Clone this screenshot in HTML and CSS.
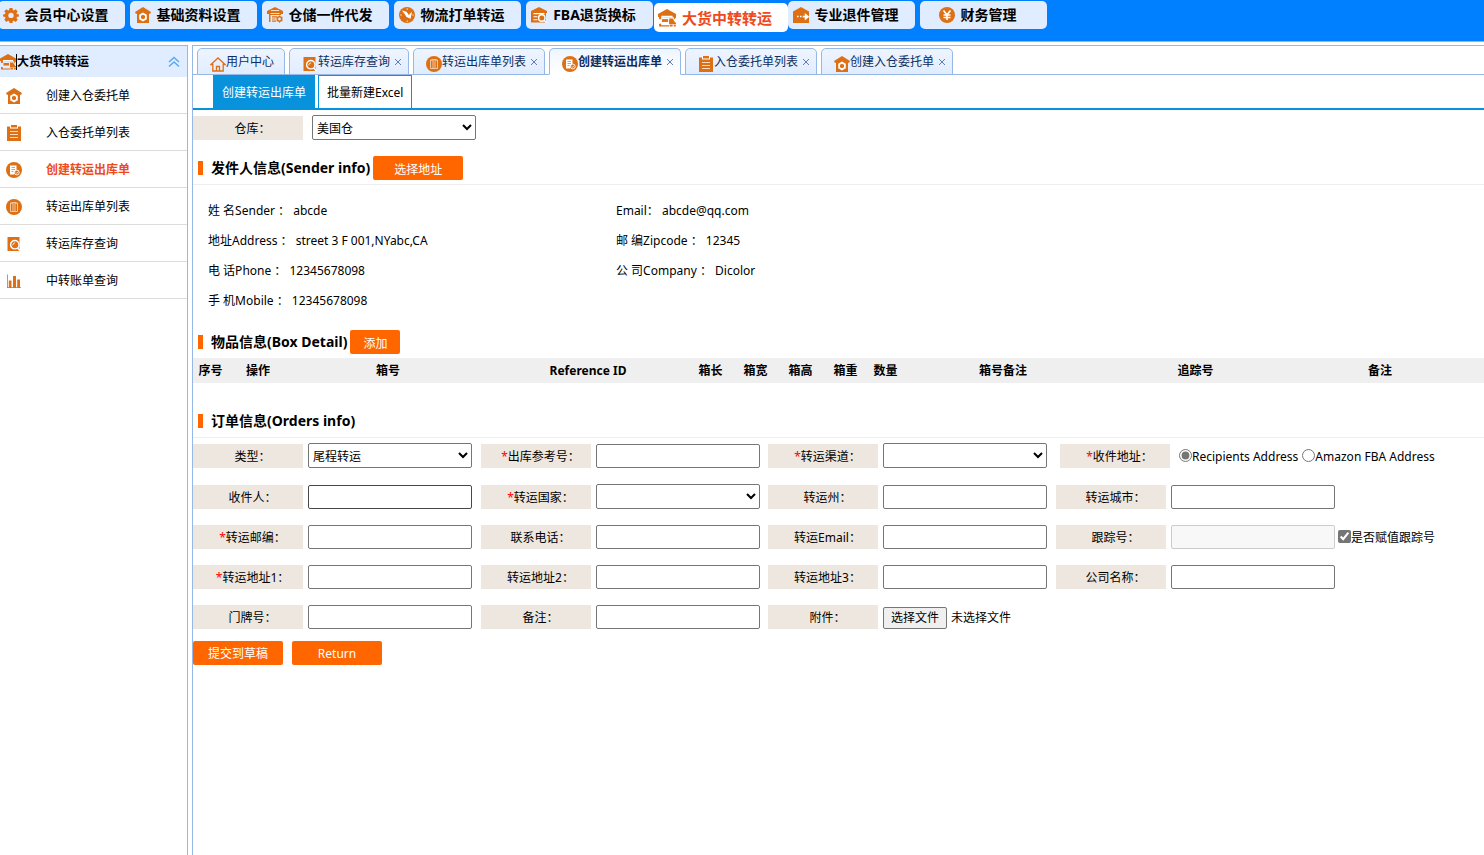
FILE: index.html
```html
<!DOCTYPE html>
<html lang="zh-CN">
<head>
<meta charset="utf-8">
<title>创建转运出库单</title>
<link rel="stylesheet" href="styles.css">
</head>
<body>
<svg class="sprite" aria-hidden="true">
  <symbol id="i-gear" viewBox="0 0 16 16"><path fill-rule="evenodd" d="M6.500 1h3l.4 2 1 .4 1.700-1.200 2.100 2.100-1.200 1.700.4 1 2 .4v2.200l-2 .5-.4 1 1.200 1.700-2.100 2.100-1.700-1.200-1 .4-.4 1.900h-3l-.4-1.900-1-.4-1.700 1.200-2.100-2.100 1.200-1.700-.4-1-2-.5V7.400l2-.4.4-1-1.200-1.700 2.100-2.100 1.700 1.200 1-.4zM8 5.700a2.700 2.700 0 1 0 0 5.400 2.700 2.700 0 0 0 0-5.400z"/></symbol>
  <symbol id="i-house" viewBox="0 0 16 16"><path d="M8 0l8 5-.8 1.800H14V16H2V6.800H.8L0 5z"/><path fill="none" stroke="#fff" stroke-width="1.800" d="M8 6.600l2.900 1.700v3.400L8 13.400l-2.900-1.700V8.300z"/></symbol>
  <symbol id="i-depot" viewBox="0 0 16 16"><path d="M8 0l8 4v3h-2V6H2v1H0V4z"/><path d="M2 6h12v2H2zM2 8h1.500v7H2zM5 9.200h5v1.200H5zM5 11.400h3.500v1.200H5zM5 13.600h4v1.200H5z"/><path class="hole" d="M4 3.300h8v.8H4zM3.500 6.300h9V7h-9z"/><circle cx="12.500" cy="12" r="2.200" fill="none" stroke="currentColor" stroke-width="1.600"/><path stroke="currentColor" d="M12.500 8.500v1.500M12.500 14v1.700M9.500 10.300l1.300.7M14.200 13l1.300.8M15.500 10.300l-1.300.7M10.800 13l-1.300.8"/></symbol>
  <symbol id="i-compass" viewBox="0 0 16 16"><circle cx="8" cy="8" r="8"/><path class="hole" d="M3 3.500l4.500 1.300 2.300 3.200L12.500 5l.3 1-1.300 5.800L7.500 10 6 7.500z"/><path class="hole" opacity=".8" d="M7.700 1.200h1v1.500h-1zM1.200 7.500h1.500v1H1.200zM13.300 7.500h1.500v1h-1.500zM7.700 13.500h1V15h-1z"/></symbol>
  <symbol id="i-find" viewBox="0 0 16 16"><path d="M8 0l8 4v2H0V4z"/><path d="M0 5h15v10.500H0z"/><path class="hole" d="M2.500 6h11v1.200h-11zM2.500 9.200h4v1h-4zM2.500 12.300h4v1h-4z"/><circle cx="10.800" cy="11" r="3.200" stroke="#fff" stroke-width="1.400"/><path stroke="#fff" stroke-width="1.500" d="M13 13.200l2.600 2.500"/></symbol>
  <symbol id="i-transit" viewBox="0 0 16 16"><path d="M8 0l8 4.500v3L14 9.500V7.300H2.800V9H1V15.500H10V14.500H2.800V13H10V9.500h2.600L14.500 12H16v1.500h-6V13H1V7H0V4.500z"/><path d="M3.500 9H9v2.500H3.500z"/><path class="hole" d="M3 6h10v1.300H3z"/><path d="M10 8.500h3l2 3V13h-5zM10.500 14h2.500v1.500h-2.500zM14 14h1.800v1.500H14z"/></symbol>
  <symbol id="i-return" viewBox="0 0 16 16"><path d="M8 0l8 4.500V16H0V4.500z"/><path class="hole" d="M4 8.700h1.500v1.600H4zM7 8.700h1.500v1.600H7zM9.800 8.700h2V6l4.200 3.500v.5l-4.200 3.500v-3h-2z"/></symbol>
  <symbol id="i-yen" viewBox="0 0 16 16"><circle cx="8" cy="8" r="8"/><path fill="none" stroke="#fff" stroke-width="1.600" d="M4.500 3.500L8 7.700l3.500-4.200M8 7.500V13M4.500 8h7M4.500 10.500h7"/></symbol>
  <symbol id="i-home" viewBox="0 0 16 16"><path fill="none" stroke="currentColor" stroke-width="1.300" d="M1 8.500L8 2l7 6.500h-1.800V15H2.800V8.500zM6.500 15v-4.500h3V15"/></symbol>
  <symbol id="i-query" viewBox="0 0 16 16"><path d="M1.500 1h12v14h-12z"/><circle cx="8.800" cy="8.700" r="4.200" stroke="#fff" stroke-width="1.400"/><path stroke="#fff" stroke-width="1.500" d="M11.500 12l3 3"/><path stroke="#fff" fill="none" d="M6.800 9.300c0-1.500 1-2.400 2.300-2.400"/></symbol>
  <symbol id="i-round-list" viewBox="0 0 16 16"><circle cx="8" cy="8" r="8"/><path fill="none" stroke="#f4d2b2" stroke-width=".9" d="M6 4H4.500v8.500h7V4H10M6 3.500h4V5H6zM6 7h4M6 9h4M6 11h4"/></symbol>
  <symbol id="i-round-doc" viewBox="0 0 16 16"><circle cx="8" cy="8" r="8"/><path class="hole" d="M4 3.500h6.500V8L8 12.500H4z"/><path fill="none" stroke="currentColor" stroke-width=".7" d="M5.500 5.500H9M5.500 7.500H9M5.500 9.500h2"/><circle cx="10.800" cy="10.500" r="2.400" stroke="#fff" stroke-width=".9"/><path fill="none" stroke="#fff" stroke-width=".8" d="M9.800 10.500l.8.800 1.300-1.500"/></symbol>
  <symbol id="i-list" viewBox="0 0 16 16"><path d="M1 1.500h14V16H1z"/><path class="hole" d="M4 0h1v2.500h6V0h1v3.500H4z"/><path d="M5 0h6v2H5z"/><path class="hole" opacity=".75" d="M4 6h8v1H4zM4 9h8v1H4zM4 12h8v1H4z"/></symbol>
  <symbol id="i-chart" viewBox="0 0 16 16"><path d="M1 1.500h.8v12.700H15v.8H1zM2.800 7.500h2.700v6.700H2.800zM7 3h3v11.200H7zM11.200 6.500H14v7.700h-2.800z"/></symbol>
</svg>

<header class="topbar">
  <nav class="topnav">
    <a class="topnav-item" href="#"><svg class="icon"><use href="#i-gear"/></svg>会员中心设置</a>
    <a class="topnav-item" href="#"><svg class="icon"><use href="#i-house"/></svg>基础资料设置</a>
    <a class="topnav-item" href="#"><svg class="icon"><use href="#i-depot"/></svg>仓储一件代发</a>
    <a class="topnav-item" href="#"><svg class="icon"><use href="#i-compass"/></svg>物流打单转运</a>
    <a class="topnav-item" href="#"><svg class="icon"><use href="#i-find"/></svg>FBA退货换标</a>
    <a class="topnav-item active" href="#"><svg class="icon"><use href="#i-transit"/></svg>大货中转转运</a>
    <a class="topnav-item" href="#"><svg class="icon"><use href="#i-return"/></svg>专业退件管理</a>
    <a class="topnav-item" href="#"><svg class="icon"><use href="#i-yen"/></svg>财务管理</a>
  </nav>
</header>

<div class="layout">
  <aside class="sidebar">
    <div class="sidebar-head">
      <svg class="icon"><use href="#i-transit"/></svg>
      <span class="sidebar-title">大货中转转运</span>
      <svg class="collapse" viewBox="0 0 12 12"><path d="M1 6l5-4.500L11 6M1 10.500L6 6l5 4.500"/></svg>
    </div>
    <nav class="menu">
      <a class="menu-item" href="#"><svg class="icon"><use href="#i-house"/></svg>创建入仓委托单</a>
      <a class="menu-item" href="#"><svg class="icon"><use href="#i-list"/></svg>入仓委托单列表</a>
      <a class="menu-item active" href="#"><svg class="icon"><use href="#i-round-doc"/></svg>创建转运出库单</a>
      <a class="menu-item" href="#"><svg class="icon"><use href="#i-round-list"/></svg>转运出库单列表</a>
      <a class="menu-item" href="#"><svg class="icon"><use href="#i-query"/></svg>转运库存查询</a>
      <a class="menu-item" href="#"><svg class="icon"><use href="#i-chart"/></svg>中转账单查询</a>
    </nav>
  </aside>

  <main class="main">
    <div class="tabs">
      <a class="tab" href="#"><svg class="icon"><use href="#i-home"/></svg>用户中心</a>
      <a class="tab" href="#"><svg class="icon"><use href="#i-query"/></svg>转运库存查询<svg class="close" viewBox="0 0 8 8"><path d="M1 1l6 6M7 1L1 7"/></svg></a>
      <a class="tab" href="#"><svg class="icon"><use href="#i-round-list"/></svg>转运出库单列表<svg class="close" viewBox="0 0 8 8"><path d="M1 1l6 6M7 1L1 7"/></svg></a>
      <a class="tab active" href="#"><svg class="icon"><use href="#i-round-doc"/></svg>创建转运出库单<svg class="close" viewBox="0 0 8 8"><path d="M1 1l6 6M7 1L1 7"/></svg></a>
      <a class="tab" href="#"><svg class="icon"><use href="#i-list"/></svg>入仓委托单列表<svg class="close" viewBox="0 0 8 8"><path d="M1 1l6 6M7 1L1 7"/></svg></a>
      <a class="tab" href="#"><svg class="icon"><use href="#i-house"/></svg>创建入仓委托单<svg class="close" viewBox="0 0 8 8"><path d="M1 1l6 6M7 1L1 7"/></svg></a>
    </div>

    <div class="subtabs">
      <a class="subtab active" href="#">创建转运出库单</a>
      <a class="subtab" href="#">批量新建Excel</a>
    </div>

    <div class="depot-row">
      <label class="label" for="depot">仓库：</label>
      <select class="control" id="depot"><option>美国仓</option></select>
    </div>

    <section>
      <h2 class="heading ruled"><span>发件人信息(Sender info)</span><button class="btn" type="button">选择地址</button></h2>
      <div class="sender">
        <div>姓 名Sender ： abcde</div><div>Email： abcde@qq.com</div>
        <div>地址Address ： street 3 F 001,NYabc,CA</div><div>邮 编Zipcode ： 12345</div>
        <div>电 话Phone ： 12345678098</div><div>公 司Company ： Dicolor</div>
        <div>手 机Mobile ： 12345678098</div>
      </div>
    </section>

    <section class="boxes">
      <h2 class="heading"><span>物品信息(Box Detail)</span><button class="btn small" type="button">添加</button></h2>
      <table class="box-table">
        <colgroup><col class="w35"><col class="w60"><col class="w200"><col class="w200"><col class="w45"><col class="w45"><col class="w45"><col class="w45"><col class="w35"><col class="w200"><col class="w185"><col></colgroup>
        <thead><tr><th>序号</th><th>操作</th><th>箱号</th><th>Reference ID</th><th>箱长</th><th>箱宽</th><th>箱高</th><th>箱重</th><th>数量</th><th>箱号备注</th><th>追踪号</th><th class="last">备注</th></tr></thead>
      </table>
    </section>

    <section>
      <h2 class="heading ruled"><span>订单信息(Orders info)</span></h2>
      <form class="order">
        <div class="fields">
          <div class="field"><label class="label" for="type">类型：</label><select class="control" id="type"><option>尾程转运</option></select></div>
          <div class="field"><label class="label" for="ref"><i>*</i>出库参考号：</label><input class="control" id="ref" type="text"></div>
          <div class="field"><label class="label" for="channel"><i>*</i>转运渠道：</label><select class="control" id="channel"><option></option></select></div>
          <div class="field choice"><span class="label"><i>*</i>收件地址：</span>
            <div class="radios">
              <label class="tick"><input type="radio" name="addr" checked>Recipients Address</label>
              <label class="tick"><input type="radio" name="addr">Amazon FBA Address</label>
            </div>
          </div>

          <div class="field"><label class="label" for="person">收件人：</label><input class="control current" id="person" type="text"></div>
          <div class="field"><label class="label" for="country"><i>*</i>转运国家：</label><select class="control" id="country"><option></option></select></div>
          <div class="field"><label class="label" for="state">转运州：</label><input class="control" id="state" type="text"></div>
          <div class="field"><label class="label" for="city">转运城市：</label><input class="control" id="city" type="text"></div>

          <div class="field"><label class="label" for="zip"><i>*</i>转运邮编：</label><input class="control" id="zip" type="text"></div>
          <div class="field"><label class="label" for="phone">联系电话：</label><input class="control" id="phone" type="text"></div>
          <div class="field"><label class="label" for="email">转运Email：</label><input class="control" id="email" type="text"></div>
          <div class="field"><label class="label" for="track">跟踪号：</label><input class="control" id="track" type="text" disabled><label class="tick after"><input type="checkbox" checked>是否赋值跟踪号</label></div>

          <div class="field"><label class="label" for="a1"><i>*</i>转运地址1：</label><input class="control" id="a1" type="text"></div>
          <div class="field"><label class="label" for="a2">转运地址2：</label><input class="control" id="a2" type="text"></div>
          <div class="field"><label class="label" for="a3">转运地址3：</label><input class="control" id="a3" type="text"></div>
          <div class="field"><label class="label" for="company">公司名称：</label><input class="control" id="company" type="text"></div>

          <div class="field"><label class="label" for="door">门牌号：</label><input class="control" id="door" type="text"></div>
          <div class="field"><label class="label" for="note">备注：</label><input class="control" id="note" type="text"></div>
          <div class="field"><label class="label" for="file">附件：</label><input id="file" type="file" hidden><div class="file"><button class="file-btn" type="button">选择文件</button><span>未选择文件</span></div></div>
        </div>
        <div class="actions">
          <button class="btn" type="button">提交到草稿</button>
          <button class="btn" type="button">Return</button>
        </div>
      </form>
    </section>
  </main>
</div>
</body>
</html>
```
FILE: styles.css
```css
* { box-sizing: border-box; }

body {
  margin: 0;
  min-height: 100vh;
  display: flex;
  flex-direction: column;
  overflow-x: hidden;
  background: #fff;
  color: #000;
  font: 12px/18px "Noto Sans", "Noto Sans CJK SC", sans-serif;
}

a { color: inherit; text-decoration: none; }
button, input, select { font: inherit; color: inherit; }

.sprite { display: none; }
.hole { fill: #fff; }
.icon {
  flex: none;
  width: 16px;
  height: 16px;
  fill: currentColor;
  color: #dd7014;
}

/* top navigation */
.topbar {
  height: 42px;
  background: #007fff;
  border-bottom: 1px solid #95b8e7;
}
.topnav {
  display: flex;
  gap: 5px;
  padding-top: 1px;
  margin-left: -2px;
}
.topnav-item {
  flex: none;
  display: flex;
  align-items: center;
  justify-content: center;
  gap: 6px;
  width: 127px;
  height: 28px;
  padding-right: 12px;
  border-radius: 5px;
  background: #e0ecff;
  font-size: 14px;
  font-weight: bold;
  white-space: nowrap;
}
.topnav-item.active {
  width: 134px;
  height: 29px;
  margin: 2px -5px 0 -4px;
  background: #fff;
  color: #ef4a1c;
  font-size: 15px;
}
.topnav-item.active .icon { width: 18px; height: 18px; }

/* page frame */
.layout {
  flex: 1;
  display: flex;
  gap: 4px;
  padding-top: 3px;
}
.sidebar {
  flex: none;
  width: 188px;
  border: solid #95b8e7;
  border-width: 1px 1px 0 0;
}
.main {
  flex: 1;
  min-width: 0;
  border: solid #95b8e7;
  border-width: 1px 0 0 1px;
}

/* sidebar */
.sidebar-head {
  display: flex;
  align-items: center;
  height: 31px;
  padding: 1px 7px 0 0;
  background: #e0ecff;
  font-weight: bold;
}
.sidebar-title {
  flex: 1;
  line-height: 16px;
  border-left: 1px solid #000;
}
.collapse {
  width: 12px;
  height: 12px;
  fill: none;
  stroke: #5aa9f0;
  stroke-width: 1.5;
}
.menu-item {
  display: flex;
  align-items: center;
  gap: 24px;
  height: 37px;
  padding: 2px 0 0 6px;
  border-bottom: 1px solid #ddd;
}
.menu-item.active { color: #ef4a1c; font-weight: bold; }

/* document tabs */
.tabs {
  display: flex;
  gap: 4px;
  height: 29px;
  padding: 2px 0 0 4px;
  border-bottom: 1px solid #95b8e7;
}
.tab {
  display: flex;
  align-items: center;
  height: 27px;
  padding: 0 10px 0 12px;
  border: 1px solid #95b8e7;
  border-radius: 5px 5px 0 0;
  background: linear-gradient(#eff5ff, #e0ecff);
  color: #0e2d5f;
  white-space: nowrap;
}
.tab .icon { margin-top: 4px; }
.tab.active {
  background: linear-gradient(#eff5ff, #fff);
  border-bottom-color: #fff;
  font-weight: bold;
}
.close {
  width: 8px;
  height: 8px;
  margin: 0 -4px 0 4px;
  fill: none;
  stroke: #5c7fb5;
}

.subtabs {
  display: flex;
  gap: 3px;
  height: 35px;
  padding-left: 20px;
  border-bottom: 2px solid #0892dc;
}
.subtab {
  display: flex;
  align-items: center;
  padding: 2px 8px 0;
  border: solid #0892dc;
  border-width: 1px 1px 0;
}
.subtab.active { background: #0892dc; color: #fff; }

/* shared controls */
.label {
  flex: none;
  width: 110px;
  height: 24px;
  padding-left: 9px;
  background: #eee7df;
  line-height: 26px;
  text-align: center;
}
.label i { color: #f00; font-style: normal; }
.control {
  flex: none;
  width: 164px;
  height: 24px;
  padding: 0 4px;
  border: 1px solid #767676;
  border-radius: 2px;
  background: #fff;
}
select.control { height: 25px; padding: 2px 0 0; }
.control.current { border-color: #484848; }
.control:disabled { background: #f8f8f8; border-color: #ccc; }
.btn {
  width: 90px;
  height: 24px;
  padding: 2px 0 0;
  border: 0;
  border-radius: 2px;
  background: #f60;
  color: #fff;
  font-size: 12px;
  font-weight: normal;
}
.btn.small { width: 50px; }

.depot-row {
  display: flex;
  align-items: flex-end;
  gap: 9px;
  margin-top: 5px;
}

/* sections */
.heading {
  display: flex;
  align-items: center;
  height: 28px;
  margin: 0;
  padding-left: 5px;
  font-size: 14px;
  line-height: 24px;
}
.heading::before {
  content: "";
  width: 5px;
  height: 14px;
  margin-right: 8px;
  background: #f60;
}
.heading .btn { margin-left: 3px; }
.heading.ruled {
  height: 33px;
  margin-top: 12px;
  border-bottom: 1px solid #eee;
}
.sender {
  display: grid;
  grid-template-columns: 408px 1fr;
  padding: 11px 0 0 15px;
  line-height: 30px;
}
.boxes { margin: 12px 0 22px; }
.box-table {
  width: 100%;
  margin-top: 2px;
  table-layout: fixed;
  border-collapse: collapse;
  background: #efefef;
}
.box-table th { height: 25px; padding: 0; white-space: nowrap; }
.box-table .last { padding-right: 12px; }
.w35 { width: 35px; }
.w45 { width: 45px; }
.w60 { width: 60px; }
.w185 { width: 185px; }
.w200 { width: 200px; }

/* order form */
.order { padding-top: 5px; }
.fields {
  display: grid;
  grid-template-columns: 288px 287px 288px 1fr;
  row-gap: 16px;
  align-items: end;
}
.field { display: flex; align-items: flex-end; gap: 5px; white-space: nowrap; }
.choice { padding-left: 4px; gap: 9px; }
.radios { display: flex; gap: 4px; }
.tick { display: flex; align-items: center; height: 24px; padding-top: 2px; }
.tick input {
  width: 13px;
  height: 13px;
  margin: 0 0 4px;
  accent-color: #757575;
}
.tick.after { margin-left: -2px; }
.file { display: flex; align-items: center; gap: 4px; height: 24px; padding-top: 1px; }
.file-btn {
  width: 64px;
  height: 22px;
  padding: 0;
  border: 1px solid #767676;
  border-radius: 2px;
  background: #efefef;
}
.actions { display: flex; gap: 9px; margin-top: 12px; }
```
